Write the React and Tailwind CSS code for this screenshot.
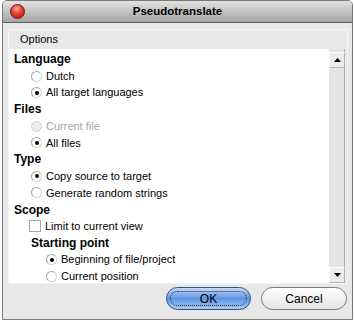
import React from 'react';

const Radio = ({ checked, disabled }) => (
  <span
    className={`w-[11px] h-[11px] rounded-full border flex items-center justify-center shrink-0 ${
      disabled
        ? 'border-[#d0d0d0] bg-[#ececec]'
        : 'border-[#a4a4a4] border-b-[#d4d4d4] border-r-[#d4d4d4] bg-white'
    }`}
  >
    {checked && <span className="w-[4px] h-[4px] rounded-full bg-black" />}
  </span>
);

const Header = ({ children, indent }) => (
  <div className={`h-[16.7px] flex items-center font-bold text-[12px] text-black ${indent ? 'pl-[18px]' : 'pl-[1px]'}`}>
    {children}
  </div>
);

const Option = ({ label, checked, disabled, indent }) => (
  <div className={`h-[16.7px] flex items-center gap-[4px] ${indent ? 'pl-[33px]' : 'pl-[18px]'}`}>
    <Radio checked={checked} disabled={disabled} />
    <span className={disabled ? 'text-[#a8a8a8]' : 'text-black'}>{label}</span>
  </div>
);

const ScrollButton = ({ up }) => (
  <div className="h-[16px] w-[16px] bg-[#ececec] border border-t-white border-l-white border-r-[#b4b4b4] border-b-[#b4b4b4] flex items-center justify-center">
    <svg width="7" height="4" viewBox="0 0 7 4">
      {up ? <path d="M0 4 L3.5 0 L7 4 Z" fill="#000" /> : <path d="M0 0 L3.5 4 L7 0 Z" fill="#000" />}
    </svg>
  </div>
);

export default function App() {
  return (
    <div className="w-[354px] h-[321px] bg-white" style={{ fontFamily: '"Liberation Sans", Arial, sans-serif' }}>
      <div className="ml-[2px] w-[351px] h-[320px] border border-[#7a7a7a] rounded-t-[5px] bg-[#e8e8e8] flex flex-col overflow-hidden">
        {/* Title bar */}
        <div className="h-[22px] shrink-0 grid grid-cols-[1fr_auto_1fr] items-center bg-gradient-to-b from-[#e2e2e2] to-[#a4a4a4] border-b border-[#5e5e5e]">
          <div className="pl-[7px] flex items-center">
            <span className="w-[15px] h-[15px] rounded-full border border-[#7a1010] bg-[radial-gradient(circle_at_45%_30%,#ffb0a8_0%,#e8443a_40%,#a80e0e_100%)]" />
          </div>
          <div className="font-bold text-[11.5px] text-black">Pseudotranslate</div>
          <div />
        </div>

        {/* Body */}
        <div className="flex-1 flex flex-col pl-[5px] pr-[4px] pt-[6px]">
          <div className="border border-[#f4f4f4] flex flex-col">
            <div className="h-[19px] flex items-center pl-[11px] text-[11px] text-black bg-[#e8e8e8]">Options</div>
            <div className="flex pr-[2px]">
              <div className="flex-1 h-[234px] bg-white overflow-hidden pt-[2px] pl-[4px] text-[11px]">
                <Header>Language</Header>
                <Option label="Dutch" />
                <Option label="All target languages" checked />
                <Header>Files</Header>
                <Option label="Current file" disabled />
                <Option label="All files" checked />
                <Header>Type</Header>
                <Option label="Copy source to target" checked />
                <Option label="Generate random strings" />
                <Header>Scope</Header>
                <div className="h-[16.7px] flex items-center gap-[4px] pl-[16px]">
                  <span className="w-[12px] h-[12px] border border-[#a8a8a8] bg-white shrink-0" />
                  <span className="text-black">Limit to current view</span>
                </div>
                <Header indent>Starting point</Header>
                <Option label="Beginning of file/project" checked indent />
                <Option label="Current position" indent />
              </div>
              <div className="w-[16px] h-[234px] flex flex-col justify-between pt-[3px] bg-[#e4e4e4] border-r border-[#b0b0b0]">
                <ScrollButton up />
                <ScrollButton />
              </div>
            </div>
          </div>

          {/* Buttons */}
          <div className="flex justify-end gap-[10px] mt-[3px] pr-[1px]">
            <button className="w-[85px] h-[23px] rounded-full border border-[#33518f] bg-gradient-to-b from-[#c6dcf8] via-[#5f93e2] to-[#a8ccf6] p-[3px] flex">
              <span className="flex-1 rounded-full border border-dotted border-[#222] flex items-center justify-center text-[12px] text-black">
                OK
              </span>
            </button>
            <button className="w-[86px] h-[23px] rounded-full border border-[#7c7c7c] bg-gradient-to-b from-white to-[#e4e4e4] flex items-center justify-center text-[12px] text-black">
              Cancel
            </button>
          </div>
        </div>
      </div>
    </div>
  );
}
